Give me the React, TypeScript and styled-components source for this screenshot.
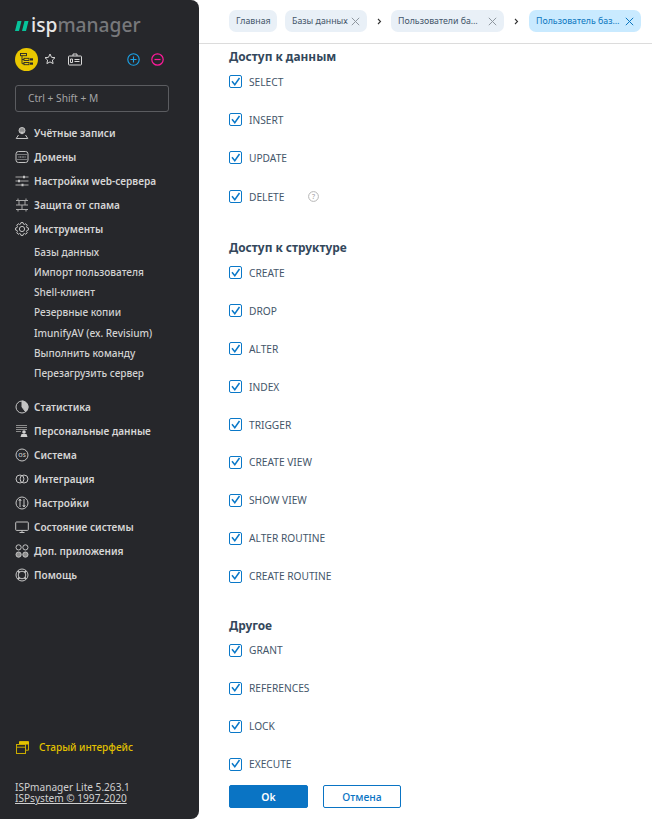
import React from "react";
import styled, { createGlobalStyle } from "styled-components";

const Global = createGlobalStyle`
  html, body { margin: 0; padding: 0; background: #fff; }
  body { font-family: "Noto Sans", "Open Sans", sans-serif; }
  * { box-sizing: border-box; }
`;
const Page = styled.div`display: flex; width: 652px; height: 819px; overflow: hidden; background: #fff;`;
const Sidebar = styled.aside`
  width: 199px; height: 819px; flex: none; background: #26272b; border-radius: 0 8px 8px 0;
  display: flex; flex-direction: column; padding: 0 0 15px 15px; color: #d8d8d8;
`;
const LogoRow = styled.div`display: flex; align-items: center; gap: 2px; height: 30px; margin-top: 10px; margin-left: 1px; font-size: 19.2px; font-weight: 500; line-height: 30px;`;
const LogoLight = styled.span`color: #e6e6e6;`;
const LogoDim = styled.span`color: #77787b;`;
const Tools = styled.div`display: flex; align-items: center; height: 24px; margin-top: 7px;`;
const Badge = styled.div`width: 23px; height: 23px; border-radius: 50%; background: #e9c700; display: flex; align-items: center; justify-content: center; margin-right: 6px;`;
const ToolSlot = styled.div<{ $ml?: number }>`display: flex; margin-left: ${p => p.$ml ?? 0}px;`;
const Search = styled.div`
  width: 154px; height: 27px; margin-top: 14px; border: 1px solid #5b5c60; border-radius: 3px;
  padding-left: 12px; font-size: 10.2px; line-height: 25px; color: #a4a4a6;
`;
const Menu = styled.nav`display: flex; flex-direction: column; margin-top: 9px;`;
const MenuGroup = styled.div`display: flex; flex-direction: column;`;
const MenuItem = styled.div`display: flex; align-items: center; height: 24px; gap: 5px; font-size: 10.05px; font-weight: 600; color: #d6d6d6; white-space: nowrap;`;
const SubList = styled.div`display: flex; flex-direction: column; padding: 1px 0 12px 19px;`;
const SubItem = styled.div`height: 20.17px; font-size: 10.05px; line-height: 20px; font-weight: 500; color: #d2d2d2; white-space: nowrap;`;
const OldLink = styled.div`display: flex; align-items: center; gap: 10px; margin-top: auto; margin-bottom: 2px; padding-left: 1px; font-size: 10.05px; font-weight: 500; color: #e3c200; height: 16px;`;
const Copy = styled.div`margin-top: 25px; font-size: 10.1px; line-height: 11px; color: #d0d0d0;`;
const CopyLink = styled.div`text-decoration: underline;`;

const Main = styled.main`flex: 1; min-width: 0; display: flex; flex-direction: column; height: 819px;`;
const Crumbs = styled.header`height: 44px; flex: none; border-bottom: 1px solid #dcdcdc; display: flex; align-items: center; padding: 0 0 1px 30px;`;
const Crumb = styled.div<{ $w: number; $active?: boolean }>`
  width: ${p => p.$w}px; height: 22px; flex: none; border-radius: 7px; background: ${p => p.$active ? "#c9eaff" : "#e9f0f7"};
  color: ${p => p.$active ? "#0b77c0" : "#44566a"}; font-size: 8.8px; line-height: 22px; padding: 0 7px;
  display: flex; align-items: center; justify-content: space-between; white-space: nowrap;
`;
const Chevron = styled.div<{ $w: number }>`width: ${p => p.$w}px; flex: none; display: flex; justify-content: center;`;
const Gap = styled.div`width: 8px; flex: none;`;
const Content = styled.div`flex: 1; min-height: 0; padding: 3.2px 0 0 30px; display: flex; flex-direction: column;`;
const Section = styled.section`display: flex; flex-direction: column; margin-bottom: 29.5px; &:last-child { margin-bottom: 0; }`;
const Heading = styled.h3`margin: 0 0 6.8px; height: 18px; font-size: 11.9px; line-height: 18px; font-weight: 700; color: #33475b;`;
const Rows = styled.div`display: flex; flex-direction: column; gap: 17.9px;`;
const Row = styled.label<{ $hint?: boolean }>`display: flex; align-items: center; height: 20px; gap: 7px; font-size: 10.2px; color: #44566a; margin-top: ${p => p.$hint ? 1 : 0}px; margin-bottom: ${p => p.$hint ? 2 : 0}px;`;
const Box = styled.span`width: 13px; height: 13px; border: 1.3px solid #0a78c8; border-radius: 2px; display: flex; align-items: center; justify-content: center; flex: none; background: #fff;`;
const Hint = styled.span`display: flex; margin-left: 17px;`;
const Footer = styled.footer`display: flex; flex: none; gap: 15px; padding: 0 0 11px 30px;`;
const Button = styled.button<{ $primary?: boolean }>`
  width: ${p => p.$primary ? 79 : 78}px; height: 23px; border-radius: 2px; font-family: inherit; font-size: 10.4px; padding: 0;
  border: 1px solid #0a74c4; background: ${p => p.$primary ? "#0a74c4" : "#fff"}; color: ${p => p.$primary ? "#fff" : "#0a74c4"};
  font-weight: ${p => p.$primary ? 600 : 500};
`;

const S = ({ children }: { children: React.ReactNode }) => (
  <svg width={14} height={14} viewBox="0 0 14 14" fill="none" stroke="#c4c4c4" strokeWidth="1" style={{ flex: "none" }}>{children}</svg>
);
const gearPath = (() => {
  let d = "";
  for (let i = 0; i < 8; i++) {
    const a = (i / 8) * Math.PI * 2;
    const pts = [[-0.3, 5.1], [-0.16, 6.5], [0.16, 6.5], [0.3, 5.1]];
    pts.forEach(([o, r], j) => {
      const x = 7 + r * Math.cos(a + o), y = 7 + r * Math.sin(a + o);
      d += `${i === 0 && j === 0 ? "M" : "L"}${x.toFixed(2)} ${y.toFixed(2)}`;
    });
  }
  return d + "Z";
})();
const icons: Record<string, React.ReactNode> = {
  users: <S><circle cx="7" cy="4.5" r="3" fill="#8d8d8d" /><path d="M7 8.5 5 5.8h4z" fill="#c4c4c4" stroke="none" /><path d="M3.5 9 1.2 12.5h11.6L10.5 9" /></S>,
  domains: <S><rect x="1" y="1.5" width="12" height="11" rx="2.4" /><path d="M1.5 4.5h11M1.5 9.5h11" stroke="#77787b" /><path d="M3.5 7h7" strokeDasharray="1 .6" strokeWidth="1.2" /></S>,
  sliders: <S><path d="M.5 3h13M.5 7h13M.5 11h13" stroke="#a8a8a8" /><path d="M9 1.8v2.4M4 5.8v2.4M7.5 9.8v2.4" strokeWidth="2" /></S>,
  spam: <S><path d="M1 2.5h12M1 7h12M1 11.5h12M4 2.5V7M10 2.5V7M7 7v4.5M3 .5v2M11 .5v2M3 11.5v2M11 11.5v2" stroke="#a8a8a8" /></S>,
  gear: <S><path d={gearPath} /><circle cx="7" cy="7" r="2.6" /></S>,
  stat: <S><circle cx="7" cy="7" r="6" /><path d="M7 1v6l3.6 4.8A6 6 0 0 0 13 7a6 6 0 0 0-6-6z" fill="#c4c4c4" /></S>,
  data: <S><path d="M1 1.5h11M1 3.5h11M1 5.5h11M1 7.5h5" strokeWidth="1.2" stroke="#8d8d8d" /><circle cx="9" cy="8" r="1.8" fill="#d0d0d0" stroke="none" /><path d="M5.5 13h7l-1-3h-5z" fill="#d0d0d0" stroke="none" /></S>,
  os: <S><circle cx="7" cy="7" r="6" /><text x="7" y="9" fontSize="5.6" textAnchor="middle" fill="#c4c4c4" stroke="none" fontFamily="Noto Sans">OS</text></S>,
  integ: <S><circle cx="5" cy="7" r="4" /><circle cx="9" cy="7" r="4" /></S>,
  settings: <S><circle cx="7" cy="7" r="6" /><path d="M5 3v8M9 3v8" /><path d="M3.8 5 5 3l1.2 2M7.8 9 9 11l1.2-2" /></S>,
  monitor: <S><rect x=".7" y="2" width="12.6" height="8.4" rx=".8" /><path d="M7 10.4v2M4.5 12.5h5" /></S>,
  apps: <S><circle cx="3.6" cy="3.4" r="2.6" /><circle cx="10.4" cy="3.4" r="2.6" /><circle cx="3.6" cy="10.6" r="2.6" fill="#8d8d8d" /><circle cx="10.4" cy="10.6" r="2.6" fill="#8d8d8d" /></S>,
  help: <S><circle cx="7" cy="7" r="6" /><circle cx="7" cy="7" r="3.8" /><path d="M2.8 2.8l1.7 1.7M11.2 2.8 9.5 4.5M2.8 11.2l1.7-1.7M11.2 11.2 9.5 9.5" strokeWidth="1.8" /></S>,
};
const Item = ({ icon, label }: { icon: string; label: string }) => <MenuItem>{icons[icon]}{label}</MenuItem>;
const Close = ({ c = "#8f979f" }: { c?: string }) => (
  <svg width="9" height="9" viewBox="0 0 9 9" stroke={c} strokeWidth="1" fill="none" style={{ flex: "none" }}><path d="M.8.8l7.4 7.4M8.2.8.8 8.2" /></svg>
);
const Arrow = () => <svg width="5" height="7" viewBox="0 0 5 7" fill="none" stroke="#333" strokeWidth="1.1"><path d="M1 1l2.5 2.5L1 6" /></svg>;
const Check = ({ label, hint }: { label: string; hint?: boolean }) => (
  <Row $hint={hint}>
    <Box><svg width="11" height="10" viewBox="0 0 11 10" fill="none" stroke="#0a78c8" strokeWidth="1.5"><path d="M2 4.2l2.8 3.6L9.5 1" /></svg></Box>
    {label}
    {hint && <Hint><svg width="11" height="11" viewBox="0 0 11 11" fill="none"><circle cx="5.5" cy="5.5" r="4.9" stroke="#b5b5b5" /><text x="5.5" y="8" fontSize="7" textAnchor="middle" fill="#a0a0a0" fontFamily="Noto Sans">?</text></svg></Hint>}
  </Row>
);
const Sec = ({ title, items, hint }: { title: string; items: string[]; hint?: string }) => (
  <Section>
    <Heading>{title}</Heading>
    <Rows>{items.map(i => <Check key={i} label={i} hint={i === hint} />)}</Rows>
  </Section>
);

export default function App() {
  return (
    <Page>
      <Global />
      <Sidebar>
        <LogoRow>
          <svg width="14" height="10" viewBox="0 0 14 10" fill="#07c39b" style={{ marginTop: 1, marginLeft: -1 }}><path d="M2.5 0H6.5L4 10H0zM9.5 0h4L11 10H7z" /></svg>
          <span><LogoLight>isp</LogoLight><LogoDim>manager</LogoDim></span>
        </LogoRow>
        <Tools>
          <Badge><svg width="14" height="13" viewBox="0 0 14 13" fill="none" stroke="#26272b" strokeWidth=".9"><rect x=".5" y=".5" width="6" height="2.2" /><path d="M2 2.7v8h2M2 6.5h2" /><rect x="4" y="5.3" width="5" height="2.2" /><rect x="4" y="9.5" width="5" height="2.2" /><rect x="10" y="5.3" width="3" height="2.2" fill="#26272b" stroke="none" /><rect x="10" y="9.5" width="3" height="2.2" fill="#26272b" stroke="none" /></svg></Badge>
          <ToolSlot><svg width="12" height="12" viewBox="0 0 12 12" fill="none" stroke="#d8d8d8" strokeWidth="1"><path d="M6 1l1.5 3.3 3.5.4-2.6 2.4.7 3.5L6 8.9l-3.1 1.7.7-3.5L1 4.7l3.5-.4z" /></svg></ToolSlot>
          <ToolSlot $ml={12}><svg width="14" height="13" viewBox="0 0 14 13" fill="none" stroke="#d8d8d8" strokeWidth="1"><rect x=".5" y="3" width="13" height="9" rx=".8" /><path d="M5 3V1h4v2M2.5 6h2v3.5h-2zM6.5 6.5h5M6.5 8.5h5" /></svg></ToolSlot>
          <ToolSlot $ml={45}><svg width="13" height="13" viewBox="0 0 13 13" fill="none" stroke="#1ba3e8" strokeWidth="1.1"><circle cx="6.5" cy="6.5" r="5.7" /><path d="M3.5 6.5h6M6.5 3.5v6" /></svg></ToolSlot>
          <ToolSlot $ml={11}><svg width="13" height="13" viewBox="0 0 13 13" fill="none" stroke="#ff1a9a" strokeWidth="1.2"><circle cx="6.5" cy="6.5" r="5.7" /><path d="M3.5 6.5h6" /></svg></ToolSlot>
        </Tools>
        <Search>Ctrl + Shift + M</Search>
        <Menu>
          <MenuGroup>
            <Item icon="users" label="Учётные записи" />
            <Item icon="domains" label="Домены" />
            <Item icon="sliders" label="Настройки web-сервера" />
            <Item icon="spam" label="Защита от спама" />
            <Item icon="gear" label="Инструменты" />
          </MenuGroup>
          <SubList>
            {["Базы данных", "Импорт пользователя", "Shell-клиент", "Резервные копии", "ImunifyAV (ex. Revisium)", "Выполнить команду", "Перезагрузить сервер"].map(s => <SubItem key={s}>{s}</SubItem>)}
          </SubList>
          <MenuGroup>
            <Item icon="stat" label="Статистика" />
            <Item icon="data" label="Персональные данные" />
            <Item icon="os" label="Система" />
            <Item icon="integ" label="Интеграция" />
            <Item icon="settings" label="Настройки" />
            <Item icon="monitor" label="Состояние системы" />
            <Item icon="apps" label="Доп. приложения" />
            <Item icon="help" label="Помощь" />
          </MenuGroup>
        </Menu>
        <OldLink>
          <svg width="13" height="13" viewBox="0 0 13 13" fill="none" stroke="#c9ab00"><path d="M3.5 3V.8h9v8.4H10" /><path d="M3.5.8h9V3h-9z" fill="#e3c200" stroke="#e3c200" /><rect x=".5" y="3.5" width="9" height="9" /><path d="M.5 6.2h9" /></svg>
          Старый интерфейс
        </OldLink>
        <Copy>ISPmanager Lite 5.263.1<CopyLink>ISPsystem © 1997-2020</CopyLink></Copy>
      </Sidebar>
      <Main>
        <Crumbs>
          <Crumb $w={48}>Главная</Crumb>
          <Gap />
          <Crumb $w={82}>Базы данных<Close /></Crumb>
          <Chevron $w={24}><Arrow /></Chevron>
          <Crumb $w={113}>Пользователи ба…<Close /></Crumb>
          <Chevron $w={25}><Arrow /></Chevron>
          <Crumb $w={112} $active>Пользователь баз…<Close c="#0b77c0" /></Crumb>
        </Crumbs>
        <Content>
          <Sec title="Доступ к данным" items={["SELECT", "INSERT", "UPDATE", "DELETE"]} hint="DELETE" />
          <Sec title="Доступ к структуре" items={["CREATE", "DROP", "ALTER", "INDEX", "TRIGGER", "CREATE VIEW", "SHOW VIEW", "ALTER ROUTINE", "CREATE ROUTINE"]} />
          <Sec title="Другое" items={["GRANT", "REFERENCES", "LOCK", "EXECUTE"]} />
        </Content>
        <Footer>
          <Button $primary>Ok</Button>
          <Button>Отмена</Button>
        </Footer>
      </Main>
    </Page>
  );
}
